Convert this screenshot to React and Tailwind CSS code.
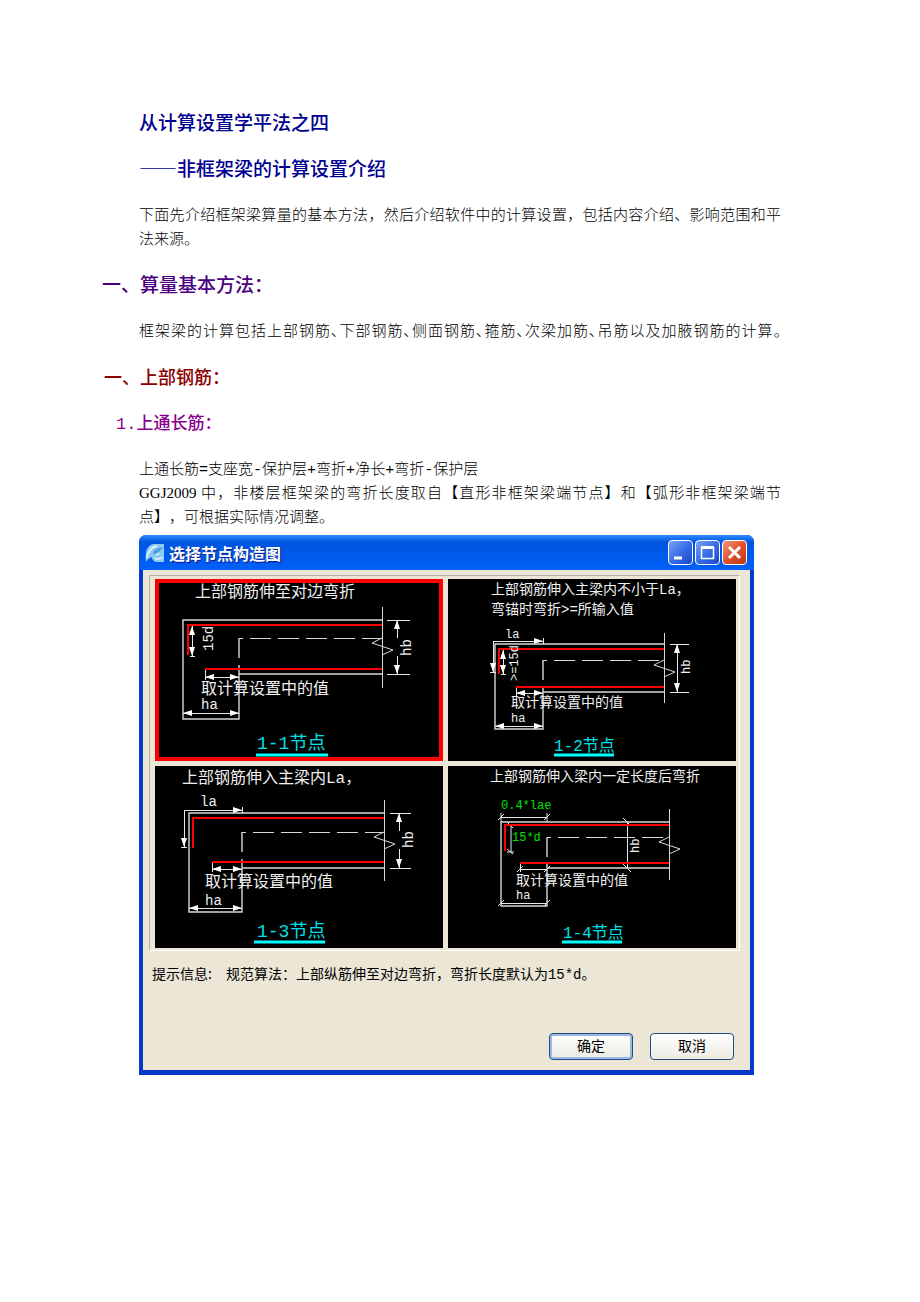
import React, { useState } from "react";

// Every drawing shares one 288 x 182 canvas
const nodes = [
  {
    id: "1-1",
    titles: [{ text: "上部钢筋伸至对边弯折", x: 40, y: 18 }],
    size: 16,
    left: 28,
    column: 84,
    right: 227,
    top: 41,
    dashY: 59,
    bottom: 95,
    foot: 140,
    cut: [28, 109],
    red: { x: 33, y: 46, end: 76, lowX: 50, lowY: 90 },
    bend: { text: "15d", x: 37, y1: 47, y2: 77, tx: 58, ty: 72 },
    hb: { x: 242, x1: 232, x2: 255, tx: 256, ty: 77, gap: [59, 77] },
    value: { x: 46, y: 115, lineY: 98 },
    ha: { x: 46, y: 130, lineY: 134 },
    label: { x: 102, y: 170, size: 18, x1: 101, x2: 173 },
  },
  {
    id: "1-2",
    titles: [
      { text: "上部钢筋伸入主梁内不小于La，", x: 43, y: 15 },
      { text: "弯锚时弯折>=所输入值", x: 43, y: 35 },
    ],
    size: 14,
    left: 47,
    column: 95,
    right: 216,
    top: 65,
    dashY: 81,
    bottom: 113,
    foot: 150,
    cut: [54, 124],
    red: { x: 51, y: 70, end: 95, lowX: 68, lowY: 108 },
    la: { x: 57, y: 59, lineX: 45, lineY: 62, end: 93 },
    bend: { text: ">=15d", x: 55, y1: 71, y2: 95, tx: 70, ty: 102 },
    hb: { x: 229, x1: 222, x2: 241, tx: 242, ty: 95 },
    value: { x: 63, y: 128, lineY: 114 },
    ha: { x: 63, y: 143, lineY: 147 },
    label: { x: 106, y: 172, size: 16, x1: 106, x2: 166 },
  },
  {
    id: "1-3",
    titles: [{ text: "上部钢筋伸入主梁内La，", x: 27, y: 17 }],
    size: 16,
    left: 34,
    column: 87,
    right: 229,
    top: 47,
    dashY: 66,
    bottom: 102,
    foot: 146,
    cut: [34, 115],
    red: { x: 38, y: 52, end: 82, lowX: 57, lowY: 96 },
    la: { x: 45, y: 40, lineX: 29, lineY: 44, end: 81 },
    hb: { x: 244, x1: 235, x2: 256, tx: 258, ty: 82, gap: [65, 83] },
    value: { x: 50, y: 121, lineY: 103 },
    ha: { x: 50, y: 139, lineY: 142 },
    label: { x: 102, y: 171, size: 18, x1: 99, x2: 170 },
  },
  {
    id: "1-4",
    titles: [{ text: "上部钢筋伸入梁内一定长度后弯折", x: 42, y: 15 }],
    size: 14,
    slash: true,
    left: 53,
    column: 99,
    right: 221,
    top: 56,
    dashY: 71,
    bottom: 102,
    foot: 140,
    cut: [43, 114],
    red: { x: 57, y: 59, end: 85, lowX: 72, lowY: 97 },
    hb: { x: 179, x1: 179, x2: 179, tx: 191, ty: 87 },
    value: { x: 68, y: 119, lineY: 103 },
    ha: { x: 68, y: 133, lineY: 137 },
    label: { x: 115, y: 172, size: 16, x1: 114, x2: 174 },
  },
];

function Head({ x, y, dir }) {
  const turn = { right: 0, down: 90, left: 180, up: 270 }[dir];
  return (
    <path
      d="M0 0L-9 -3V3Z"
      fill="#fff"
      stroke="none"
      transform={`translate(${x} ${y}) rotate(${turn})`}
    />
  );
}

function Slash({ x, y }) {
  return <path d={`M${x - 3} ${y + 3}L${x + 3} ${y - 3}`} />;
}

function Dimension({ x1, x2, y, slash }) {
  return (
    <g>
      <path d={`M${x1} ${y}H${x2}`} shapeRendering="crispEdges" />
      {slash ? (
        <>
          <Slash x={x1} y={y} />
          <Slash x={x2} y={y} />
        </>
      ) : (
        <>
          <Head x={x1} y={y} dir="left" />
          <Head x={x2} y={y} dir="right" />
        </>
      )}
    </g>
  );
}

function NodeDrawing({ node }) {
  const { left, column, right, top, dashY, bottom, foot, red, hb, la, bend } =
    node;
  const { value, ha, label, slash, size } = node;
  const latin = size === 16 ? 14 : 12;
  const gap = hb.gap || [bottom, top];

  return (
    <svg
      viewBox="0 0 288 182"
      className="block w-full bg-black font-['Liberation_Mono','Noto_Sans_CJK_SC',monospace]"
    >
      {/* concrete outline */}
      <g stroke="#d8d8d8" strokeWidth="1" fill="none">
        <path
          d={`M${right} ${top}H${left}V${foot}H${column}V${dashY + 27}M${column} ${
            dashY + 20
          }V${dashY}M${column} ${bottom}H${right}`}
          strokeWidth="1.4"
        />
        <g shapeRendering="crispEdges">
          <path
            d={`M${column} ${dashY}H${right}`}
            strokeDasharray="21 7"
            strokeDashoffset="17"
          />
          <path d={`M${right} ${node.cut[0]}V${node.cut[1]}`} />
        </g>
      </g>
      <path
        d={`M${right} ${dashY}l-10 5l21 7l-11 5`}
        stroke="#d8d8d8"
        fill="none"
      />

      {/* dimensions */}
      <g stroke="#e8e8e8" strokeWidth="1" fill="none">
        <Dimension x1={left} x2={column} y={ha.lineY} slash={slash} />
        <Dimension x1={red.lowX} x2={column} y={value.lineY} slash={slash} />
        <g shapeRendering="crispEdges">
          <path d={`M${red.lowX} ${red.lowY}V${value.lineY + 3}`} />
          <path d={`M${hb.x1} ${top}H${hb.x2}M${hb.x1} ${bottom}H${hb.x2}`} />
          <path d={`M${hb.x} ${top}V${gap[0]}M${hb.x} ${gap[1]}V${bottom}`} />
        </g>
        {slash ? (
          <path
            d={`M${hb.x - 4} ${top - 4}l8 8M${hb.x - 4} ${bottom - 4}l8 8`}
          />
        ) : (
          <>
            <Head x={hb.x} y={top} dir="up" />
            <Head x={hb.x} y={bottom} dir="down" />
          </>
        )}
        {la && (
          <>
            <path
              d={`M${la.lineX} ${la.end}V${la.lineY}H${column}M${column} ${
                la.lineY - 3
              }v6M${la.lineX - 3} ${la.end}h6`}
              shapeRendering="crispEdges"
            />
            <Head x={column} y={la.lineY} dir="right" />
            <Head x={la.lineX} y={la.end} dir="down" />
          </>
        )}
        {bend && (
          <>
            <path
              d={`M${bend.x} ${bend.y1}V${bend.y2}M${bend.x - 2} ${bend.y2}h5`}
              shapeRendering="crispEdges"
            />
            <Head x={bend.x} y={bend.y1} dir="up" />
            <Head x={bend.x} y={bend.y2} dir="down" />
          </>
        )}
        {slash && (
          <>
            <Dimension x1={left} x2={column} y={51} slash />
            <path d={`M${left} 47V${top}M${column} 47V${top}`} />
            <path d="M63 59V86M59 56l6 6M59 83l6 5M59 86h7" />
          </>
        )}
      </g>

      {/* rebar */}
      <path
        d={`M${right} ${red.y}H${red.x}V${red.end}M${red.lowX} ${red.lowY}H${right}`}
        stroke="#f00"
        strokeWidth="2"
        fill="none"
      />

      <g fill="#f0f0f0" fontSize={size}>
        {node.titles.map((line) => (
          <text key={line.text} x={line.x} y={line.y}>
            {line.text}
          </text>
        ))}
        <text x={value.x} y={value.y}>
          取计算设置中的值
        </text>
        <g fontSize={latin}>
          <text x={ha.x} y={ha.y}>
            ha
          </text>
          {la && (
            <text x={la.x} y={la.y}>
              la
            </text>
          )}
          <text transform={`translate(${hb.tx} ${hb.ty}) rotate(-90)`}>hb</text>
          {bend && (
            <text transform={`translate(${bend.tx} ${bend.ty}) rotate(-90)`}>
              {bend.text}
            </text>
          )}
        </g>
      </g>

      {slash && (
        <g fill="#00e000" fontSize="12">
          <text x="53" y="43">
            0.4*lae
          </text>
          <text x="64" y="75">
            15*d
          </text>
        </g>
      )}

      <text x={label.x} y={label.y} fontSize={label.size} fill="#00e0e8">
        {node.id}节点
      </text>
      <path
        d={`M${label.x1} 176H${label.x2}`}
        stroke="#0ff"
        strokeWidth="3"
      />
    </svg>
  );
}

function TitleButton({ label, close, children }) {
  return (
    <button
      type="button"
      aria-label={label}
      className={`flex h-[25px] w-[25px] items-center justify-center rounded-[4px] border border-white ${
        close
          ? "bg-linear-to-br from-[#f0937a] via-[#e0522c] to-[#c03410]"
          : "bg-linear-to-br from-[#7ba2f4] via-[#3a6ee8] to-[#1c48c8]"
      }`}
    >
      <svg
        viewBox="0 0 23 23"
        className="h-[23px] w-[23px]"
        fill="none"
        stroke="#fff"
        strokeWidth="3"
      >
        {children}
      </svg>
    </button>
  );
}

function Dialog() {
  const [selected, setSelected] = useState("1-1");

  return (
    <section
      aria-labelledby="dialog-title"
      className="mt-[7px] w-full max-w-[615px] rounded-t-[7px] border-x-4 border-b-[5px] border-[#0838c8] bg-[#0838c8] font-['Noto_Sans_CJK_SC',sans-serif]"
    >
      {/* Title bar */}
      <header className="-mx-1 flex h-[35px] items-center gap-1 rounded-t-[7px] bg-linear-to-b from-[#2f8cff] via-[#0054e0] via-20% to-[#0060f8] pr-[7px] pl-[6px]">
        <svg viewBox="0 0 20 20" className="h-5 w-5">
          <path
            d="M1 19C0 10 1 3 8 1H19V19H13C9 19 7 17 7 14C4 15 2 17 1 19Z"
            fill="#8ccbf2"
          />
          <path
            d="M2 15C3 8 6 4 12 3M9 11H14M10 15C12 17 15 16 18 14"
            stroke="#e8f8ff"
            strokeWidth="1.5"
            fill="none"
          />
          <path d="M8 9C10 6 13 5 18 4L14 9L9 12Z" fill="#4a9ee0" />
        </svg>
        <h2
          id="dialog-title"
          className="flex-1 text-[16px] leading-6 font-bold text-white [text-shadow:1px_1px_1px_#0a1883]"
        >
          选择节点构造图
        </h2>
        <div className="flex gap-[2px]">
          <TitleButton label="最小化">
            <path d="M5 17H13" />
          </TitleButton>
          <TitleButton label="最大化">
            <path d="M5 6.5H18" />
            <path d="M5.5 6V17.5H17.5V6" strokeWidth="1.5" />
          </TitleButton>
          <TitleButton label="关闭" close>
            <path d="M6 6L17 17M17 6L6 17" />
          </TitleButton>
        </div>
      </header>

      <div className="bg-[#ece6d6] pt-[5px] pb-[10px] text-[14px] leading-5 text-black">
        <div className="mr-[10px] ml-[6px] grid grid-cols-2 gap-[5px] border border-[#b4b0a4] border-r-white border-b-white pt-[3px] pr-[3px] pb-[2px] pl-[5px]">
          {nodes.map((node) => (
            <button
              key={node.id}
              type="button"
              aria-pressed={selected === node.id}
              onClick={() => setSelected(node.id)}
              className={
                selected === node.id
                  ? "outline-4 -outline-offset-4 outline-[#ff0000]"
                  : ""
              }
            >
              <NodeDrawing node={node} />
            </button>
          ))}
        </div>

        <p className="mt-3 flex gap-[14px] pl-[9px]">
          <span>提示信息:</span>
          <span>
            规范算法：上部纵筋伸至对边弯折，弯折长度默认为<Latin>15*d</Latin>。
          </span>
        </p>

        <div className="mt-[50px] flex justify-end gap-[17px] pr-4">
          <button
            type="button"
            className="h-[27px] w-[84px] rounded-[4px] border border-[#1c4f80] bg-linear-to-b from-white to-[#eceae2] pb-1 ring-2 ring-[#9db8e8] ring-inset"
          >
            确定
          </button>
          <button
            type="button"
            className="h-[27px] w-[84px] rounded-[4px] border border-[#1c4f80] bg-linear-to-b from-white to-[#eceae2] pb-1"
          >
            取消
          </button>
        </div>
      </div>
    </section>
  );
}

function Latin({ children }) {
  return (
    <span className="font-['Liberation_Mono',monospace] leading-none font-normal">
      {children}
    </span>
  );
}

function App() {
  return (
    <main
      lang="zh-CN"
      className="min-h-screen bg-white px-[139px] pt-[110px] pb-16 font-['Noto_Sans_CJK_SC',sans-serif] text-black"
    >
      <article className="flex flex-col gap-[22px] text-[15px] leading-6">
        <h1 className="text-[19px] font-medium text-[#000090]">
          从计算设置学平法之四
        </h1>
        <h1 className="text-[19px] font-medium text-[#000090]">
          ——非框架梁的计算设置介绍
        </h1>

        <div className="font-light">
          <p className="[text-align-last:justify]">
            下面先介绍框架梁算量的基本方法，然后介绍软件中的计算设置，包括内容介绍、影响范围和平
          </p>
          <p>法来源。</p>
        </div>

        <h2 className="-ml-[37px] text-[19px] font-medium text-[#4b0082]">
          一、算量基本方法：
        </h2>

        <p className="font-light [font-feature-settings:'palt'] [text-align-last:justify]">
          框架梁的计算包括上部钢筋、下部钢筋、侧面钢筋、箍筋、次梁加筋、吊筋以及加腋钢筋的计算。
        </p>

        <h3 className="-ml-[35px] text-[18px] font-medium text-[#8b0000]">
          一、上部钢筋：
        </h3>

        <h4 className="-ml-[23px] text-[17px] font-medium text-[#8b008b]">
          <Latin>1.</Latin>上通长筋：
        </h4>

        <div className="font-light">
          <p>
            上通长筋<Latin>=</Latin>支座宽<Latin>-</Latin>保护层
            <Latin>+</Latin>弯折<Latin>+</Latin>净长<Latin>+</Latin>弯折
            <Latin>-</Latin>保护层
          </p>
          <p className="[text-align-last:justify]">
            <span className="font-['Liberation_Serif',serif] leading-none font-normal">
              GGJ2009
            </span>{" "}
            中，非楼层框架梁的弯折长度取自【直形非框架梁端节点】和【弧形非框架梁端节
          </p>
          <p className="[text-spacing-trim:space-all]">
            点】，可根据实际情况调整。
          </p>
          <div className="font-normal">
            <Dialog />
          </div>
        </div>
      </article>
    </main>
  );
}

export default App;
